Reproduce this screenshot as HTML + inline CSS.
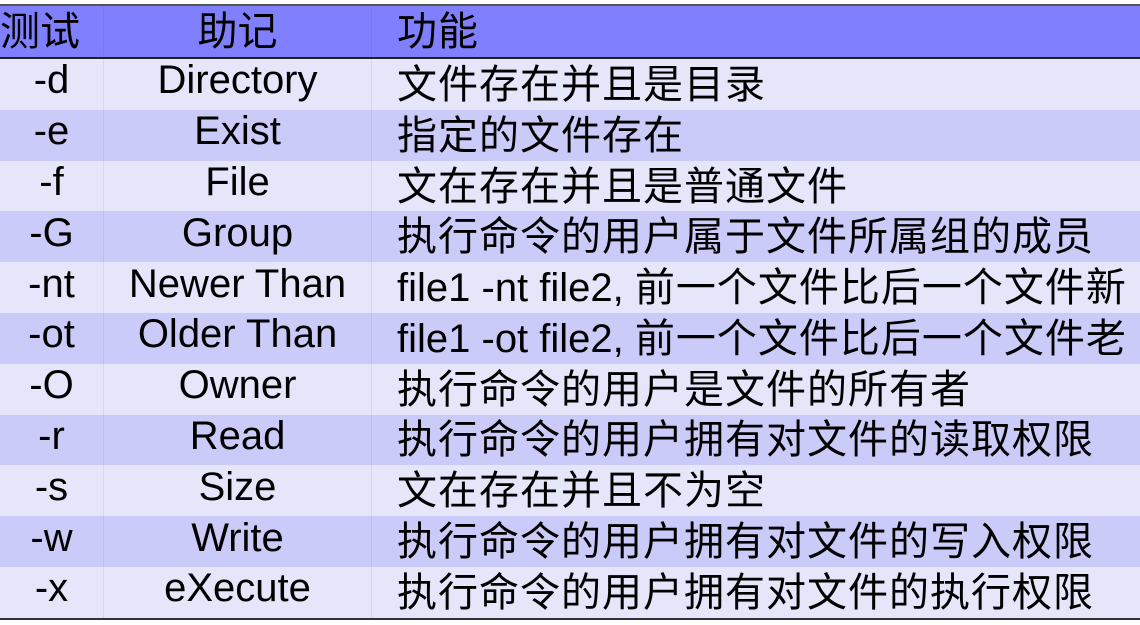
<!DOCTYPE html>
<html><head><meta charset="utf-8"><style>
body{margin:0;width:1140px;height:623px;background:#fff;overflow:hidden;font-family:"Liberation Sans","Noto Sans CJK SC",sans-serif;}
.t{position:absolute;left:0;top:4px;width:1140px;border-top:2px solid #555;border-bottom:2px solid #333;}
.r{display:flex;height:50.8px;align-items:center;font-size:40px;color:#000;}
.h{height:51px;background:#8080ff;border-bottom:2px solid #222;}
.a{background:#e6e6fb}.b{background:#cbcbf9}
.c1,.c2{text-align:center;border-right:1px solid rgba(0,0,0,0.06);height:100%;display:flex;align-items:center;justify-content:center;padding-bottom:7px;box-sizing:border-box}
.c1{width:104px}.c2{width:268px}
.c3{padding-left:25px;white-space:nowrap;padding-bottom:7px}
.k{letter-spacing:1px}
.h .c1{justify-content:flex-start}
</style></head><body><div class="t">
<div class="r h"><div class="c1">测试</div><div class="c2">助记</div><div class="c3 k">功能</div></div>
<div class="r a"><div class="c1">-d</div><div class="c2">Directory</div><div class="c3 k">文件存在并且是目录</div></div>
<div class="r b"><div class="c1">-e</div><div class="c2">Exist</div><div class="c3 k">指定的文件存在</div></div>
<div class="r a"><div class="c1">-f</div><div class="c2">File</div><div class="c3 k">文在存在并且是普通文件</div></div>
<div class="r b"><div class="c1">-G</div><div class="c2">Group</div><div class="c3 k">执行命令的用户属于文件所属组的成员</div></div>
<div class="r a"><div class="c1">-nt</div><div class="c2">Newer Than</div><div class="c3">file1 -nt file2, <span class="k">前一个文件比后一个文件新</span></div></div>
<div class="r b"><div class="c1">-ot</div><div class="c2">Older Than</div><div class="c3">file1 -ot file2, <span class="k">前一个文件比后一个文件老</span></div></div>
<div class="r a"><div class="c1">-O</div><div class="c2">Owner</div><div class="c3 k">执行命令的用户是文件的所有者</div></div>
<div class="r b"><div class="c1">-r</div><div class="c2">Read</div><div class="c3 k">执行命令的用户拥有对文件的读取权限</div></div>
<div class="r a"><div class="c1">-s</div><div class="c2">Size</div><div class="c3 k">文在存在并且不为空</div></div>
<div class="r b"><div class="c1">-w</div><div class="c2">Write</div><div class="c3 k">执行命令的用户拥有对文件的写入权限</div></div>
<div class="r a"><div class="c1">-x</div><div class="c2">eXecute</div><div class="c3 k">执行命令的用户拥有对文件的执行权限</div></div>
</div></body></html>
